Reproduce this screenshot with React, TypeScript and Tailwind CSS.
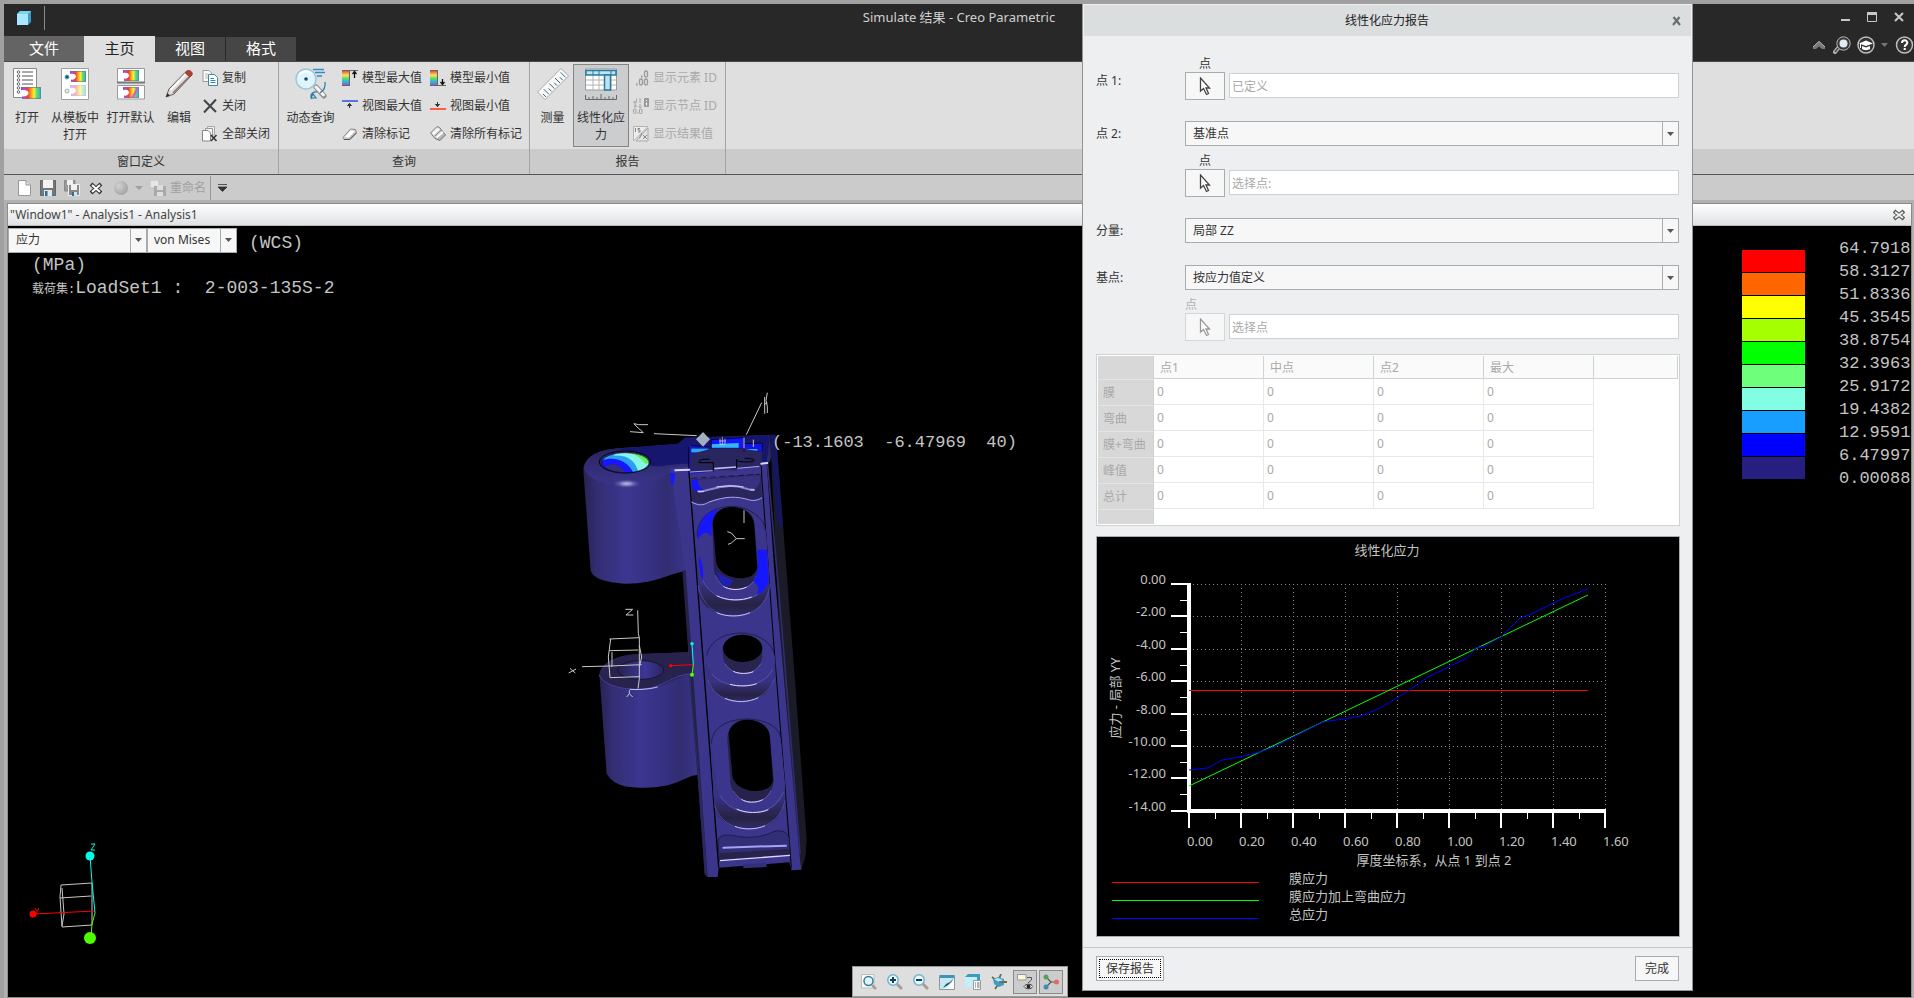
import type { ReactNode } from "react";
import { clsx } from "clsx";

const legendColors = [
  "bg-[#ff0000]",
  "bg-[#ff6600]",
  "bg-[#ffff00]",
  "bg-[#a6ff00]",
  "bg-[#00ff00]",
  "bg-[#6eff7b]",
  "bg-[#82ffe3]",
  "bg-[#189eff]",
  "bg-[#0000ff]",
  "bg-[#261f80]",
];

const legendValues = [
  "64.7918",
  "58.3127",
  "51.8336",
  "45.3545",
  "38.8754",
  "32.3963",
  "25.9172",
  "19.4382",
  "12.9591",
  "6.47997",
  "0.00088",
];

const resultRows = ["膜", "弯曲", "膜+弯曲", "峰值", "总计"];
const resultColumns = ["点1", "中点", "点2", "最大"];

/* ---------- shared gradients ---------- */

const Defs = () => (
  <svg width="0" height="0" className="absolute" aria-hidden="true">
    <defs>
      <linearGradient id="fringe" x1="0" y1="0" x2="1" y2="0">
        <stop offset="0" stopColor="#3a6cf0" />
        <stop offset=".15" stopColor="#d040d0" />
        <stop offset=".35" stopColor="#f04030" />
        <stop offset=".5" stopColor="#ff9a20" />
        <stop offset=".65" stopColor="#fff030" />
        <stop offset=".8" stopColor="#50e070" />
        <stop offset="1" stopColor="#30a8f0" />
      </linearGradient>
      <linearGradient id="spectrum" x1="0" y1="0" x2="0" y2="1">
        <stop offset="0" stopColor="#f05030" />
        <stop offset=".3" stopColor="#ffe060" />
        <stop offset=".55" stopColor="#50e060" />
        <stop offset=".78" stopColor="#30b0e8" />
        <stop offset="1" stopColor="#a050d8" />
      </linearGradient>
      <linearGradient id="metal" x1="0" y1="0" x2="1" y2="1">
        <stop offset="0" stopColor="#ffffff" />
        <stop offset="1" stopColor="#9a9a9a" />
      </linearGradient>
      <radialGradient id="ball" cx=".35" cy=".35" r=".7">
        <stop offset="0" stopColor="#d2d2d2" />
        <stop offset="1" stopColor="#a2a2a2" />
      </radialGradient>
    </defs>
  </svg>
);

/* ---------- ribbon icons ---------- */

const Icon = ({ size = 16, children }: { size?: number; children: ReactNode }) => (
  <svg width={size} height={size} viewBox={`0 0 ${size} ${size}`} fill="none" className="shrink-0" aria-hidden="true">
    {children}
  </svg>
);

const Fringe = ({ x, y, w = 16, h = 11, faded = false }: { x: number; y: number; w?: number; h?: number; faded?: boolean }) => (
  <svg x={x} y={y} width={w} height={h} viewBox="0 0 16 11" preserveAspectRatio="none" opacity={faded ? 0.4 : 1}>
    <path d="M0 0H16V11H1V8.500C3 9 6 8 6 5.500S3 2.500 0 3Z" fill="url(#fringe)" />
    <path d="M0 .5H15.500V10.500H1" stroke="#777" strokeWidth=".6" fill="none" />
  </svg>
);

const OpenIcon = () => (
  <Icon size={32}>
    <path d="M2.500 .5H25.500V29.500H2.500Z" fill="#fff" stroke="#8a8a8a" />
    {[4, 8, 12, 16, 20, 24].map((y) => (
      <g key={y}>
        <circle cx="7.500" cy={y} r="1.300" stroke="#666" />
        {y < 20 && <path d={`M11 ${y}H22`} stroke="#555" />}
      </g>
    ))}
    <Fringe x={10} y={19} w={20} h={12} />
  </Icon>
);

const TemplateIcon = () => (
  <Icon size={32}>
    <path d="M2.500 .5H29.500V31.500H2.500Z" fill="#fff" stroke="#a0a0a0" />
    <circle cx="8" cy="9" r="2" fill="#1c4d70" stroke="#5aa7cc" />
    <circle cx="8" cy="23" r="2" fill="#eee" stroke="#aaa" />
    <Fringe x={11} y={3} />
    <Fringe x={11} y={17} faded />
  </Icon>
);

const DefaultIcon = () => (
  <Icon size={32}>
    <path d="M2.500 .5H29.500V14.500H2.500ZM2.500 17.500H29.500V31H2.500Z" fill="#fff" stroke="#9a9a9a" />
    <path d="M2 14.500H30" stroke="#777" strokeWidth="2" />
    <Fringe x={8} y={2} />
    <Fringe x={8} y={19} />
    <path d="M16 30L22 19H24L19 30Z" fill="#d858d8" />
  </Icon>
);

const PencilIcon = () => (
  <Icon size={32}>
    <path d="M3 29L6 21L22 4.500L27 9L11 26Z" fill="#ddd" stroke="#6b5a55" />
    <path d="M7.500 22L23 6" stroke="#fff" strokeWidth="2" />
    <path d="M10 25L26 9" stroke="#86706a" strokeWidth="1.500" />
    <path d="M22 4.500L24.500 2.500C27 2 30 4 29 7L27 9Z" fill="#c0392f" stroke="#8c4038" />
    <path d="M3 29L4.500 25L7 27.500Z" fill="#333" />
  </Icon>
);

const CopyIcon = () => (
  <Icon>
    <path d="M1 .5H7L9.500 3V11.500H1Z" fill="#fafafa" stroke="#9a9a9a" />
    <path d="M3 4H6M3 6H7M3 8H7" stroke="#bbb" />
    <path d="M6.500 4.500H12.500L15.500 7.500V15.500H6.500Z" fill="#fff" stroke="#3c87a8" />
    <path d="M8.500 8.500H12M8.500 10.500H13.500M8.500 12.500H13.500" stroke="#3c87a8" />
  </Icon>
);

const CloseIcon = () => (
  <Icon>
    <path d="M2 2L14 14M14 1.500L2 14.500" stroke="#444" strokeWidth="2" />
  </Icon>
);

const CloseAllIcon = () => (
  <Icon>
    <path d="M5.500 .5H12.500V9H5.500Z" fill="#eee" stroke="#aaa" />
    <path d="M3.500 2.500H10.500V11H3.500Z" fill="#f4f4f4" stroke="#999" />
    <path d="M.5 4.500H6L8.500 7V15H.5Z" fill="#fff" stroke="#888" />
    <path d="M9 9L14.500 15M14.500 9L9 15" stroke="#333" strokeWidth="1.500" />
  </Icon>
);

const QueryIcon = () => (
  <Icon size={32}>
    <path d="M18 1.500H29M20 4.500H30M22 8H27" stroke="#2f8fc0" strokeWidth="1.500" />
    <path d="M21 19L29 28" stroke="#8c8c8c" strokeWidth="5" strokeLinecap="round" />
    <path d="M21 19L28.500 27" stroke="#f5f5f5" strokeWidth="3" strokeLinecap="round" />
    <circle cx="11" cy="11" r="10" fill="#dff4fc" stroke="#9cc8da" strokeWidth="1.500" />
    <path d="M4 7C7 3 13 2 17 6" stroke="#fff" strokeWidth="2" />
    <circle cx="11" cy="11" r="1.800" fill="#1d4c66" />
    <path d="M30 14C31 20 28 23 25 25M17 31C14 27 18 23 22 24M16 30L21 30L18 26Z" stroke="#2a7ba4" strokeWidth="1.200" />
  </Icon>
);

const ModelIcon = ({ min = false }: { min?: boolean }) => (
  <Icon>
    <rect x="0" y="1" width="8" height="14" fill="url(#spectrum)" />
    <path d={min ? "M0 .5H8M7.500 0V15M0 15.500H16" : "M0 .5H16M7.500 0V15M0 15.500H8"} stroke="#666" />
    <path d={min ? "M12.500 9V14M10.500 12L12.500 14.500L14.500 12" : "M12.500 8V2M10.500 4L12.500 1.500L14.500 4"} stroke="#111" strokeWidth="1.300" />
  </Icon>
);

const ViewIcon = ({ min = false }: { min?: boolean }) => (
  <Icon>
    {min ? (
      <>
        <path d="M0 11H16" stroke="#ff5a46" strokeWidth="2" />
        <path d="M7.500 4V9M5.500 6.500L7.500 8.500L9.500 6.500Z" stroke="#333" fill="#333" />
      </>
    ) : (
      <>
        <path d="M0 3H16" stroke="#5a74e0" strokeWidth="2" />
        <path d="M7.500 10V5M5.500 7.500L7.500 5.500L9.500 7.500Z" stroke="#333" fill="#333" />
      </>
    )}
  </Icon>
);

const EraserIcon = ({ all = false }: { all?: boolean }) => (
  <Icon>
    {all ? (
      <>
        <path d="M.5 7L7 .5L10 2L15.500 9L10 14.500L5 12.500Z" fill="url(#metal)" stroke="#777" />
        <path d="M3 8L9 3M6.500 11.500L13 6" stroke="#fff" strokeWidth="2" />
        <path d="M5 10L11 4" stroke="#888" />
      </>
    ) : (
      <>
        <path d="M1 11.500L8.500 3L13.500 3.500L14.500 6.500L7.500 13.500H2Z" fill="url(#metal)" stroke="#888" />
        <path d="M2.500 11L9 4.500L13 5L7 11.500Z" fill="#fff" />
        <path d="M2 13.500H8L14.500 7" stroke="#555" />
      </>
    )}
  </Icon>
);

const RulerIcon = () => (
  <Icon size={32}>
    <path d="M.5 24L24 .5L31.500 8L8 31.500Z" fill="#f8f8f8" stroke="#a8a8a8" />
    {[0, 1, 2, 3, 4, 5, 6, 7].map((i) => (
      <path key={i} d={`M${9 + i * 2.800} ${29 - i * 2.800}l${i % 2 ? -5 : -3} ${i % 2 ? -5 : -3}`} stroke="#2f6a7c" />
    ))}
  </Icon>
);

const LinearizeIcon = () => (
  <Icon size={32}>
    <path d="M.5 1H31.500V22H.5Z" fill="#fff" stroke="#999" />
    <path d="M8 6V22M14 6V22M26 6V22M1 12H31M1 17H31" stroke="#b4b4b4" />
    <path d="M1 2.500H31V7H1Z" fill="#bfe3f2" stroke="#2a7b9c" strokeWidth="1.500" />
    <path d="M8 2V7M14 2V7M26 2V7" stroke="#2a7b9c" />
    <path d="M19.500 7H25.500V22H19.500Z" fill="#bfe3f2" stroke="#2a7b9c" strokeWidth="1.500" />
    <path d="M.5 27V31.500H31.500V27M4 29V31M8 28V31M12 29V31M16 26V31M20 29V31M24 28V31M28 29V31" stroke="#666" />
  </Icon>
);

const ElementIdIcon = () => (
  <Icon>
    <path d="M8 6.500H9.500M3 14.500H4.500" stroke="#999" strokeWidth="2" />
    <rect x="11.500" y="1" width="3" height="6" rx="1.500" stroke="#999" strokeWidth="1.300" />
    <rect x="6.500" y="9" width="3" height="6" rx="1.500" stroke="#999" strokeWidth="1.300" />
    <rect x="11.500" y="9" width="3" height="6" rx="1.500" stroke="#999" strokeWidth="1.300" />
  </Icon>
);

const NodeIdIcon = () => (
  <Icon>
    <path d="M1 4H3.500V.500M3.500 5H1V3M7 0V5M2 6V10M1 8H4M7 6V10M5.500 8.500L7 10L8.500 8.500" stroke="#a6a6a6" />
    <rect x="11" y="0" width="5" height="9" rx="1" fill="#999" />
    <path d="M13.500 2V3M13.500 4.500V7.500" stroke="#fff" />
    <rect x=".5" y="11" width="2.500" height="4.500" rx="1" stroke="#a0a0a0" />
    <rect x="6.500" y="11" width="2.500" height="4.500" rx="1" stroke="#a0a0a0" />
    <path d="M4.500 15H5.500" stroke="#a0a0a0" strokeWidth="1.500" />
  </Icon>
);

const ResultValueIcon = () => (
  <Icon>
    <path d="M.5 .5H15L.5 15Z" fill="#ececec" stroke="#b4b4b4" />
    <path d="M15 2V15H3Z" fill="#e4e4e4" stroke="#aaa" />
    <path d="M2.500 2V6M7 2.500H5V4H7V6H5M6 12C7 13 8 8 9 7M10 9L14 13M14 9L10 13" stroke="#888" />
  </Icon>
);

/* ---------- ribbon pieces ---------- */

const BigButton = ({ icon, label, className, active = false }: { icon: ReactNode; label: string; className: string; active?: boolean }) => (
  <button
    type="button"
    className={clsx(
      "flex h-[83px] shrink-0 flex-col items-center border pt-[3px]",
      active ? "border-[#858585] bg-[#cccdcf]" : "border-transparent",
      className,
    )}
  >
    {icon}
    <span className="mt-[9px] w-12 text-center leading-[17px]">{label}</span>
  </button>
);

const SmallButton = ({ icon, label, disabled = false }: { icon: ReactNode; label: string; disabled?: boolean }) => (
  <button type="button" disabled={disabled} className="flex h-7 items-center gap-1 whitespace-nowrap disabled:text-[#a9a9a9]">
    {icon}
    {label}
  </button>
);

const RibbonGroup = ({ title, className, children }: { title: string; className: string; children: ReactNode }) => (
  <section className={clsx("flex shrink-0 flex-col border-r border-[#a3a3a3]", className)}>
    <div className="flex h-[87px] items-start pt-[2px]">{children}</div>
    <h2 className="h-[25px] bg-[#cbcbcb] text-center leading-[25px]">{title}</h2>
  </section>
);

const Ribbon = () => (
  <div className="flex border-b border-[#555] bg-[#dfdfdf] text-[#333]">
    <RibbonGroup title="窗口定义" className="w-[275px]">
      <BigButton icon={<OpenIcon />} label="打开" className="w-[46px]" />
      <BigButton icon={<TemplateIcon />} label="从模板中打开" className="w-[50px]" />
      <BigButton icon={<DefaultIcon />} label="打开默认" className="w-[61px]" />
      <BigButton icon={<PencilIcon />} label="编辑" className="mr-[5px] w-9" />
      <div>
        <SmallButton icon={<CopyIcon />} label="复制" />
        <SmallButton icon={<CloseIcon />} label="关闭" />
        <SmallButton icon={<CloseAllIcon />} label="全部关闭" />
      </div>
    </RibbonGroup>
    <RibbonGroup title="查询" className="w-[251px]">
      <BigButton icon={<QueryIcon />} label="动态查询" className="w-[63px]" />
      <div className="w-[88px]">
        <SmallButton icon={<ModelIcon />} label="模型最大值" />
        <SmallButton icon={<ViewIcon />} label="视图最大值" />
        <SmallButton icon={<EraserIcon />} label="清除标记" />
      </div>
      <div>
        <SmallButton icon={<ModelIcon min />} label="模型最小值" />
        <SmallButton icon={<ViewIcon min />} label="视图最小值" />
        <SmallButton icon={<EraserIcon all />} label="清除所有标记" />
      </div>
    </RibbonGroup>
    <RibbonGroup title="报告" className="w-[196px]">
      <BigButton icon={<RulerIcon />} label="测量" className="w-[43px] pl-[2px]" />
      <BigButton icon={<LinearizeIcon />} label="线性化应力" className="mr-1 w-14" active />
      <div>
        <SmallButton icon={<ElementIdIcon />} label="显示元素 ID" disabled />
        <SmallButton icon={<NodeIdIcon />} label="显示节点 ID" disabled />
        <SmallButton icon={<ResultValueIcon />} label="显示结果值" disabled />
      </div>
    </RibbonGroup>
    <div className="flex flex-1 flex-col justify-end">
      <div className="h-[25px] bg-[#cbcbcb]" />
    </div>
  </div>
);

const TitleBar = () => (
  <header className="border-b border-[#4b4749] bg-[#282828] text-white">
    <div className="flex h-8 items-start pt-[2px]">
      <div className="flex flex-1 items-center">
        <span className="flex h-6 w-[41px] items-center justify-center border-r border-[#8a8a8a] pr-px">
          <Icon size={14}>
            <path d="M0 3L3 0H14V11L11 14H0Z" fill="#3d9cc4" />
            <path d="M0 3L3 0H14L11 3Z" fill="#79d4f2" />
            <path d="M0 3H11V14H0Z" fill="#a8e9ff" />
          </Icon>
        </span>
      </div>
      <h1 className="text-[13px] leading-[22px] text-[#d0d0d0]">Simulate 结果 - Creo Parametric</h1>
      <div className="flex flex-1 justify-end">
        <div className="flex items-center gap-[11px] pt-[3px] pr-[7px] text-[#c4c8cc]">
          <button type="button" aria-label="最小化">
            <Icon><path d="M4 11H13" stroke="currentColor" strokeWidth="2" /></Icon>
          </button>
          <button type="button" aria-label="最大化">
            <Icon><path d="M3.500 4V12.500H12.500V4M3 4.500H13" stroke="currentColor" /><path d="M3 4.500H13" stroke="currentColor" strokeWidth="3" /></Icon>
          </button>
          <button type="button" aria-label="关闭">
            <Icon><path d="M4 4L12 12M12 4L4 12" stroke="currentColor" strokeWidth="2" /></Icon>
          </button>
        </div>
      </div>
    </div>
    <nav className="flex h-[25px] items-end text-[15px] leading-5">
      <button type="button" className="h-[25px] w-20 bg-[#646464] pb-[2px]">文件</button>
      <button type="button" className="-mb-px h-[26px] w-[71px] bg-[#dfdfdf] pb-[2px] text-[#222]">主页</button>
      <button type="button" className="mr-px h-6 w-[70px] bg-[#464646] pb-[2px]">视图</button>
      <button type="button" className="h-6 w-[70px] bg-[#464646] pb-[2px]">格式</button>
      <div className="ml-auto flex h-[18px] items-center self-start text-[#d2d2d2]">
        <button type="button" className="mr-[7px]" aria-label="收起功能区">
          <svg width="14" height="9" viewBox="0 0 14 9"><path d="M7 0L13 6V8H10L7 5.500L4 8H1V6Z" fill="#777" /><path d="M1 6L7 .500L13 6" stroke="#bbb" fill="none" /></svg>
        </button>
        <button type="button" className="mr-[6px]" aria-label="搜索">
          <svg width="18" height="18" viewBox="0 0 18 18" fill="none">
            <path d="M6 11L2 16" stroke="#b8b8b8" strokeWidth="4" strokeLinecap="round" />
            <path d="M6 11L2 16" stroke="#444" strokeWidth="1.500" />
            <circle cx="10.500" cy="7.500" r="6.700" fill="#383838" stroke="#b8b8b8" />
            <circle cx="10.500" cy="7.500" r="4" fill="#e4ecf2" />
          </svg>
        </button>
        <button type="button" className="mr-[6px]" aria-label="学习">
          <svg width="18" height="18" viewBox="0 0 18 18" fill="none">
            <circle cx="9" cy="9" r="8" fill="#333" stroke="#bdbdbd" strokeWidth="1.500" />
            <path d="M2 7.500L9 4.500L16 7.500L9 10Z" fill="#fff" />
            <path d="M5 10V13C7 14.500 11 14.500 13 13V10L9 11.500Z" fill="#fff" />
            <path d="M3.500 8V12" stroke="#fff" />
          </svg>
        </button>
        <svg width="7" height="4" viewBox="0 0 7 4" className="mr-[7px]"><path d="M0 0H7L3.500 4Z" fill="#777" /></svg>
        <button type="button" aria-label="帮助">
          <svg width="19" height="18" viewBox="0 0 19 18" fill="none">
            <circle cx="9.500" cy="9" r="8" fill="#333" stroke="#bdbdbd" strokeWidth="1.500" />
            <path d="M7 7C7 3.500 12.300 3.500 12.300 6.800C12.300 8.800 9.700 8.500 9.700 11" stroke="#fff" strokeWidth="2" />
            <path d="M8.700 13H10.800" stroke="#fff" strokeWidth="2" />
          </svg>
        </button>
      </div>
    </nav>
  </header>
);

const QuickBar = () => (
  <div className="flex h-[25px] items-center bg-[#cbcbcb] pl-3 text-[#a0a0a0]">
    <button type="button" className="mr-2" aria-label="新建">
      <Icon><path d="M2.500 .5H10L14.500 5V15.500H2.500Z" fill="#fff" stroke="#999" /><path d="M10 .5V5H14.500" fill="#ddd" stroke="#999" /></Icon>
    </button>
    <button type="button" className="mr-2" aria-label="保存">
      <Icon>
        <path d="M.5 .5H15.500V15.500H.5Z" fill="#777" stroke="#666" />
        <path d="M3 0H13V8H3Z" fill="#f2f2f2" />
        <path d="M4 10H12V16H4Z" fill="#d8eaf2" />
        <path d="M5 11H7.500V16H5Z" fill="#2f6f90" />
      </Icon>
    </button>
    <button type="button" className="mr-2" aria-label="全部保存">
      <Icon>
        <path d="M.5 .5H11V11H.5Z" fill="#999" stroke="#888" />
        <path d="M3 0H9V5H3Z" fill="#f2f2f2" />
        <path d="M4.500 4.500H15.500V15.500H4.500Z" fill="#888" stroke="#eee" />
        <path d="M7 5H13V10H7Z" fill="#f2f2f2" />
        <path d="M8 12H13V16H8Z" fill="#cfe3ec" />
        <path d="M8 12H10V16H8Z" fill="#2f6f90" />
      </Icon>
    </button>
    <button type="button" className="mr-[9px]" aria-label="关闭窗口">
      <Icon><path d="M3 4L13 13M13 4L3 13" stroke="#333" strokeWidth="4" /><path d="M4 5L12 12M12 5L4 12" stroke="#fff" strokeWidth="2" /></Icon>
    </button>
    <button type="button" disabled className="mr-[6px]" aria-label="外观">
      <Icon><circle cx="8" cy="8" r="7" fill="url(#ball)" /></Icon>
    </button>
    <svg width="8" height="4" viewBox="0 0 8 4" className="mr-[7px]"><path d="M0 0H8L4 4Z" fill="#a0a0a0" /></svg>
    <button type="button" disabled className="flex items-center gap-1 whitespace-nowrap">
      <Icon>
        <path d="M0 0H9V8H0Z" fill="#e6e6e6" stroke="#bbb" />
        <path d="M4 6H16V16H4Z" fill="#aaa" />
        <path d="M7 5H13V10H7ZM7 12H13V16H7Z" fill="#ddd" />
      </Icon>
      重命名
    </button>
    <span className="mr-[3px] ml-1 h-6 border-r border-[#999]" />
    <button type="button" className="ml-1" aria-label="自定义">
      <svg width="9" height="8" viewBox="0 0 9 8"><path d="M0 .5H9M0 3H9L4.500 7.500Z" stroke="#333" fill="#333" strokeWidth=".8" /></svg>
    </button>
  </div>
);

/* ---------- graphics area ---------- */

const Bracket = () => (
  <svg width="276" height="520" viewBox="-30 -10 828 1560" fill="none" className="absolute top-[151px] left-[552px]" aria-hidden="true">
    <defs>
      <linearGradient id="barrel" x1="0" y1="0" x2="1" y2="0">
        <stop offset="0" stopColor="#272350" />
        <stop offset=".12" stopColor="#332d72" />
        <stop offset=".4" stopColor="#3c3690" />
        <stop offset=".66" stopColor="#353080" />
        <stop offset=".78" stopColor="#322d72" />
        <stop offset="1" stopColor="#3b358c" />
      </linearGradient>
      <linearGradient id="bore" x1="0" y1="0" x2="1" y2="0">
        <stop offset="0" stopColor="#26224e" />
        <stop offset=".6" stopColor="#3d3797" />
        <stop offset="1" stopColor="#2a2560" />
      </linearGradient>
      <linearGradient id="shoulder" x1="0" y1="0" x2="0" y2="1">
        <stop offset=".2" stopColor="#27235a" />
        <stop offset="1" stopColor="#3b358c" />
      </linearGradient>
      <linearGradient id="wall" x1="0" y1="0" x2="0" y2="1">
        <stop offset="0" stopColor="#3b358c" />
        <stop offset=".7" stopColor="#383283" />
        <stop offset=".9" stopColor="#262244" />
        <stop offset="1" stopColor="#312c68" />
      </linearGradient>
      <filter id="soft" x="-50%" y="-200%" width="200%" height="500%">
        <feGaussianBlur stdDeviation="4" />
      </filter>
      <clipPath id="boreClip">
        <ellipse cx="166" cy="247" rx="71" ry="30" />
      </clipPath>
    </defs>

    {/* upper barrel */}
    <path d="M40 268C44 225 90 206 160 203L330 193L360 250V572C310 570 270 610 168 610C110 608 68 595 62 570Z" fill="url(#barrel)" />
    <path d="M42 262C50 222 95 206 160 203L325 190L345 172L615 163L600 245L350 262C290 262 270 316 165 316C90 312 46 290 42 262Z" fill="url(#shoulder)" />
    <path d="M110 208L325 190L345 172L600 165L590 245L350 250C300 250 270 262 244 256C240 225 190 205 110 208Z" fill="#17166e" />
    <ellipse cx="165" cy="245" rx="77" ry="33" fill="#2b2768" stroke="#05050f" strokeWidth="3" />
    <g clipPath="url(#boreClip)">
      <rect x="90" y="210" width="150" height="70" fill="#1616ff" />
      <path d="M96 240C125 228 172 236 190 278H245V210H100Z" fill="#28a0f4" />
      <path d="M130 226C176 224 196 242 206 278H245V210H140Z" fill="#88f5e6" />
      <path d="M176 218C204 225 218 238 226 250L245 246V210H180Z" fill="#5cf050" />
      <path d="M100 268C112 245 150 245 166 280H100Z" fill="#332d7c" />
    </g>
    <ellipse cx="166" cy="247" rx="71" ry="30" stroke="#0a0a20" strokeWidth="2" />
    <ellipse cx="170" cy="310" rx="34" ry="4" fill="#8c86d8" filter="url(#soft)" />
    <ellipse cx="170" cy="310" rx="18" ry="3" fill="#fff" filter="url(#soft)" />

    {/* lower barrel */}
    <path d="M88 880L110 1180C130 1212 160 1222 220 1222C280 1222 315 1210 345 1195C370 1184 380 1183 395 1183L370 815L240 820Z" fill="url(#barrel)" />
    <path d="M88 880C96 845 140 822 215 820L370 815V880C320 882 290 927 205 927C130 925 90 905 88 880Z" fill="#27234c" />
    <path d="M88 884C96 908 140 927 205 927C285 924 300 885 365 880" stroke="#4540a0" strokeWidth="3" />
    <path d="M180 927C215 929 245 925 262 920" stroke="#c8c4ff" strokeWidth="3" strokeLinecap="round" />
    <ellipse cx="212" cy="869" rx="69" ry="28" fill="url(#bore)" stroke="#0a0a18" strokeWidth="2" />

    {/* dark right side */}
    <path d="M600 163L618 165L675 900L710 1380L706 1430L694 1468L660 1420Z" fill="#1b1b27" />
    <path d="M600 165L618 165L640 450L620 420Z" fill="#16165c" />

    {/* rails and face */}
    <path d="M300 262L590 245L612 560L688 1420L694 1468L665 1470L658 1446L446 1462L443 1490L412 1490L383 1185L355 816L345 570Z" fill="#3b358c" />
    <path d="M337 570L347 570L413 1490L404 1480Z" fill="#25224a" />
    <path d="M350 816L383 1185L404 1480L412 1490L397 1270Z" fill="#2b2760" />
    <path d="M592 245L632 700L690 1420" stroke="#302b6c" strokeWidth="5" />
    <path d="M357 200V275L446 1462" stroke="#000" strokeWidth="4" />
    <path d="M572 215L576 300L612 800L664 1462" stroke="#000" strokeWidth="3" />

    {/* clip on the top */}
    <path d="M358 196H420V275L358 280Z" fill="#1818c0" />
    <path d="M364 205H415V216H364Z" fill="#2ba8f0" />
    <path d="M424 178L522 172V202H424Z" fill="#1414ff" />
    <path d="M424 192L506 188V202H424Z" fill="#34b8f4" />
    <path d="M524 190H577V212H524Z" fill="#1414e8" />
    <path d="M526 206H562V211H526Z" fill="#30a8f0" />
    <path d="M362 222L422 205H522L576 215V258L500 264V270H432V274H362Z" fill="#29255e" />
    <path d="M430 247V272M386 247H430M386 243C392 236 405 236 418 237M500 264V236M524 234C545 234 554 238 552 241C548 246 520 246 502 242" stroke="#000" strokeWidth="3" />
    <path d="M424 178V204M522 172V214M424 178L522 172M364 196L424 200M524 190L577 188V212" stroke="#000" strokeWidth="2" />
    <path d="M316 270L358 268M574 250L592 248" stroke="#d8d4ff" strokeWidth="6" strokeLinecap="round" />
    <path d="M433 265L498 260" stroke="#c0bcf8" strokeWidth="5" />
    <path d="M360 275L428 271M502 264L568 258" stroke="#a8a4f0" strokeWidth="3" />
    <path d="M300 277L316 280L310 314H304Z" fill="#1616ff" />

    {/* wavy lip */}
    <path d="M364 298L572 280L576 350C540 372 500 340 440 356C410 362 400 380 366 362Z" fill="#2a265c" />
    <path d="M364 294L568 282" stroke="#0c0c20" strokeWidth="2" strokeDasharray="18 10" />
    <path d="M368 300C372 330 385 335 405 332C430 315 510 305 545 328C565 326 570 310 572 284" fill="#37317f" />
    <path d="M366 300L385 298C380 315 395 325 407 333C395 340 375 336 366 320Z" fill="#1414ff" />
    <path d="M385 333C410 336 420 320 480 317C520 316 535 332 552 328" stroke="#8a84d8" strokeWidth="6" strokeLinecap="round" />
    <path d="M440 320C460 316 500 315 520 320M385 334H400M542 329H552" stroke="#dcd8ff" strokeWidth="3" strokeLinecap="round" />
    <path d="M364 365C385 376 400 376 415 366C470 346 500 348 535 358C555 364 565 358 576 352" stroke="#aca6f0" strokeWidth="3" />

    {/* upper slot */}
    <path d="M382 470C378 410 430 378 487 378C545 380 586 420 588 460L598 600C598 670 550 708 488 708C430 706 386 670 384 630Z" fill="url(#wall)" />
    <path d="M384 615C400 680 440 706 488 708C550 708 596 670 600 610" stroke="#5e58b4" strokeWidth="2" />
    <path d="M440 697C470 710 510 710 540 697" stroke="#c4c0ff" strokeWidth="3" />
    <path d="M382 470C378 410 430 378 487 378C545 380 586 420 588 460L597 590C590 640 550 660 494 660C430 656 398 610 390 570Z" fill="#3b358c" />
    <path d="M382 470C378 410 430 378 487 378C545 380 586 420 586 450" stroke="#16142c" strokeWidth="2" />
    <path d="M398 600C420 640 450 658 494 660C545 660 585 640 596 595" stroke="#6a64c4" strokeWidth="2" />
    <path d="M440 646C470 662 515 662 545 650" stroke="#dcd8ff" strokeWidth="3" />
    <path d="M427 440C424 395 450 380 487 380C525 382 550 400 554 430L564 570C560 605 530 628 494 628C465 626 435 605 432 570Z" fill="#26224c" />
    <path d="M436 585C450 615 465 626 494 628C530 628 550 612 560 585" stroke="#7670cc" strokeWidth="2" />
    <path d="M460 618C480 630 510 630 530 620" stroke="#dcd8ff" strokeWidth="3" />
    <path d="M384 478C380 420 410 395 445 386C428 405 424 430 425 468C410 450 395 455 384 478Z" fill="#1616ff" />
    <path d="M388 530C398 545 402 575 398 600C390 580 386 560 388 530ZM562 508H590L597 600C590 625 575 640 560 643C575 615 550 605 548 600C562 596 566 560 562 508Z" fill="#1616ff" />
    <path d="M440 570C455 590 475 590 488 600C485 618 470 622 462 618C450 608 442 590 440 570Z" fill="#2020b0" />
    <path d="M428 430C430 400 450 380 487 380C525 382 548 400 552 430L562 560C558 582 540 594 510 594C470 592 440 570 438 540Z" fill="#000" />

    {/* middle hole */}
    <path d="M408 850C405 790 460 758 515 758C575 760 615 800 616 840V880C610 940 560 965 513 965C450 962 412 920 408 890Z" fill="url(#wall)" />
    <path d="M414 900C430 945 470 964 513 965C560 964 600 935 614 895" stroke="#5e58b4" strokeWidth="2" />
    <path d="M465 954C495 967 535 967 565 952" stroke="#c4c0ff" strokeWidth="3" />
    <path d="M408 840C405 790 460 758 515 758C575 760 612 800 614 840C610 890 570 917 518 917C460 915 410 885 408 840Z" fill="#3b358c" />
    <path d="M410 825C420 780 465 758 515 758C570 760 608 790 614 825" stroke="#16142c" strokeWidth="2" />
    <path d="M424 880C445 905 480 917 518 917C560 916 595 895 608 868" stroke="#6a64c4" strokeWidth="2" />
    <path d="M480 912C505 919 540 918 560 910" stroke="#dcd8ff" strokeWidth="3" />
    <path d="M458 815C460 780 485 764 518 763C550 764 578 785 577 820C578 860 550 880 520 880C480 878 458 855 458 815Z" fill="#28244f" />
    <path d="M464 850C480 872 500 880 520 880C545 880 565 865 572 850" stroke="#7670cc" strokeWidth="2" />
    <path d="M490 873C505 881 535 881 550 874" stroke="#dcd8ff" strokeWidth="3" />
    <ellipse cx="518" cy="804" rx="59" ry="41" fill="#000" />

    {/* lower slot */}
    <path d="M422 1100C420 1040 475 1016 533 1016C590 1018 632 1050 634 1090L646 1240C645 1310 600 1346 537 1346C475 1344 435 1310 432 1270Z" fill="url(#wall)" />
    <path d="M434 1275C450 1325 490 1345 537 1346C595 1345 635 1310 645 1260" stroke="#5e58b4" strokeWidth="2" />
    <path d="M495 1338C520 1349 560 1348 585 1336" stroke="#c4c0ff" strokeWidth="3" />
    <path d="M424 1090C425 1040 475 1016 533 1016C590 1018 630 1050 632 1080L645 1210C640 1270 600 1297 545 1297C480 1294 442 1250 438 1210Z" fill="#3b358c" />
    <path d="M424 1090C425 1040 475 1016 533 1016C590 1018 625 1040 632 1070" stroke="#16142c" strokeWidth="2" />
    <path d="M450 1245C470 1280 505 1296 545 1297C590 1297 625 1275 640 1235" stroke="#6a64c4" strokeWidth="2" />
    <path d="M500 1286C525 1299 570 1300 595 1288" stroke="#dcd8ff" strokeWidth="3" />
    <path d="M472 1080C472 1035 500 1017 533 1016C570 1018 598 1040 600 1070L611 1200C608 1245 580 1266 545 1266C510 1264 482 1240 481 1200Z" fill="#26224c" />
    <path d="M490 1232C505 1255 520 1265 545 1266C575 1266 595 1250 603 1230" stroke="#7670cc" strokeWidth="2" />
    <path d="M515 1257C530 1268 560 1268 578 1258" stroke="#dcd8ff" strokeWidth="3" />
    <path d="M476 1060C478 1035 505 1018 533 1018C570 1020 595 1038 599 1065L609 1200C605 1220 590 1232 550 1232C515 1230 490 1210 487 1185Z" fill="#000" />

    {/* foot */}
    <path d="M444 1380C450 1362 470 1362 490 1366C540 1376 580 1370 610 1354C635 1346 655 1356 658 1375L660 1425L448 1442Z" fill="#332e78" stroke="#14122a" strokeWidth="2" />
    <path d="M450 1418L658 1406V1422L450 1438Z" fill="#27234c" />
    <path d="M460 1402L648 1396" stroke="#a8a2f2" strokeWidth="6" strokeLinecap="round" />
    <path d="M450 1441L660 1425" stroke="#dedaff" strokeWidth="4" />
    <path d="M520 1452V1464L590 1460V1448" fill="#332e78" />

    {/* selected point and its axes */}
    <path d="M252 160L380 166M529 163L575 67M522 390V428M499 475H524M472 454L484 458L499 475L484 488L474 492M592 37L588 60L592 78M584 50V100M592 78V98M582 72L592 68M234 133H206L192 130L198 137L220 157L180 154M550 178V200M522 172V204" stroke="#c8c8c8" strokeWidth="3" />
    <path d="M399 155L420 177L399 199L378 177Z" fill="#a3aec0" />
    <path d="M448 182H468M450 175V192H465V175M457 170V192" stroke="#ddd" strokeWidth="2" />

    {/* part coordinate system */}
    <path d="M203 690L205 760L208 772V895L204 925M36 859L120 857L215 853M118 776L208 772M118 811L205 809M122 776L115 830L120 892L208 889M126 815V860M208 795L215 830L208 860M166 687H188L168 704H190M0 864L16 878M-4 878L18 866M178 930V940L170 950M178 940L188 950" stroke="#c8c8c8" strokeWidth="3" />
    <path d="M302 856L370 853" stroke="#ff0000" strokeWidth="3" />
    <path d="M366 790L370 853" stroke="#00ffe6" strokeWidth="3" />
    <path d="M370 853L366 883" stroke="#55ff00" strokeWidth="3" />
    <circle cx="302" cy="856" r="5" fill="#ff0000" />
    <circle cx="366" cy="790" r="5" fill="#00ffe6" />
    <circle cx="366" cy="883" r="6" fill="#55ff00" />
  </svg>
);

const AxisTriad = () => (
  <svg width="80" height="110" viewBox="0 0 80 110" fill="none" className="absolute bottom-[45px] left-[18px]" aria-hidden="true">
    <path d="M35 43L66 41V83L36 85L34 55L35 43M36 46L38 72L36 84M34 56L65 54" stroke="#c8c8c8" />
    <path d="M7 72L69 69" stroke="#ff0000" />
    <path d="M64 14L66 40L69 71" stroke="#00ffe6" />
    <path d="M69 71L66 82L65 96" stroke="#55ff00" />
    <circle cx="7" cy="72" r="3.500" fill="#ff0000" />
    <circle cx="64" cy="14" r="4.500" fill="#00ffe6" />
    <circle cx="64" cy="96" r="6" fill="#4dff00" />
    <path d="M65 2H69L65 8H69" stroke="#00ffe6" />
    <path d="M9 66L11 69L13 66M11 69V72" stroke="#ff0000" />
  </svg>
);

const ColorLegend = () => (
  <div className="absolute top-[11px] right-0 flex w-[169px]">
    <ul className="mt-[13px] w-[63px] shrink-0">
      {legendColors.map((color) => (
        <li key={color} className={clsx("h-[23px] border-b border-black", color)} />
      ))}
    </ul>
    <ol className="ml-[34px] font-['Liberation_Mono',monospace] text-[17px] leading-[23px] text-[#c4c4c4]">
      {legendValues.map((value) => (
        <li key={value}>{value}</li>
      ))}
    </ol>
  </div>
);

const ViewToolbar = () => (
  <div className="absolute bottom-0 left-[844px] flex h-[31px] items-center gap-[2px] border border-[#999] bg-[#dedede] px-1">
    <button type="button" className="p-1" aria-label="重新调整">
      <Icon>
        <path d="M.5 .5H13V14H.5Z" fill="#fafafa" stroke="#bbb" />
        <circle cx="7.500" cy="7" r="4.500" fill="#e4f4fa" stroke="#2f7f9f" strokeWidth="1.500" />
        <path d="M11 11L15 15" stroke="#a89c94" strokeWidth="2.500" />
      </Icon>
    </button>
    {[true, false].map((plus) => (
      <button key={String(plus)} type="button" className="p-1" aria-label={plus ? "放大" : "缩小"}>
        <Icon>
          <path d="M10 10L15 15" stroke="#a89c94" strokeWidth="3" />
          <circle cx="6" cy="6" r="5.200" fill="#eaf8fd" stroke="#6fb4cc" strokeWidth="1.500" />
          <path d={plus ? "M3 6H9M6 3V9" : "M3 6H9"} stroke="#12405c" strokeWidth="2" />
        </Icon>
      </button>
    ))}
    <button type="button" className="p-1" aria-label="重画">
      <Icon>
        <path d="M.5 1.500H15.500V15.500H.5Z" fill="#c6e8f4" stroke="#8a9aa0" />
        <path d="M1 1H15V4H1Z" fill="#3f93b4" />
        <path d="M15 4V15H4C9 14 13 9 15 4Z" fill="#fff" />
        <path d="M4 14C8 12 12 9 15 4L11 8L7 10Z" fill="#1d4f68" />
      </Icon>
    </button>
    <button type="button" className="p-1" aria-label="已命名视图">
      <Icon>
        <path d="M0 3L3 0H15V9L12 12H0Z" fill="#3b9cc2" />
        <path d="M0 3H12V13H0Z" fill="#c5eefb" />
        <path d="M8.500 6.500H15.500V15.500H8.500Z" fill="#fff" stroke="#999" />
        <path d="M10 9H11M12 9H14.500M10 11H11M12 11H14.500M10 13H11M12 13H14.500" stroke="#666" />
      </Icon>
    </button>
    <button type="button" className="p-1" aria-label="显示样式">
      <Icon>
        <path d="M1 3L6 7M4 15L8 9M16 8L10 8M10 0L8 5" stroke="#7c6340" strokeWidth="1.800" />
        <path d="M2 5L7 3L13 5V11L8 13L3 10Z" fill="#3c9cc8" />
        <path d="M3 5L7 4L12 6L8 8Z" fill="#b4e6f8" />
        <path d="M8 8L16 8" stroke="#7c6340" strokeWidth="1.500" />
      </Icon>
    </button>
    <button type="button" className="border border-[#8a8a8a] bg-[#cbcccd] p-[3px]" aria-label="注释显示">
      <Icon>
        <path d="M.5 .5H9V6H.5Z" fill="#fff6d8" stroke="#999" />
        <path d="M10 3.500H14.500V6L11 9" stroke="#555" />
        <path d="M7 12.500C9 9.500 14 9.500 16 12.500C14 15.500 9 15.500 7 12.500Z" fill="#fff" stroke="#333" />
        <circle cx="11.500" cy="12.500" r="2" fill="#222" />
      </Icon>
    </button>
    <button type="button" className="border border-[#8a8a8a] bg-[#cbcccd] p-[3px]" aria-label="基准显示">
      <Icon>
        <path d="M3 3L8 8L3 13M8 8H13" stroke="#555" strokeWidth="1.200" />
        <circle cx="3" cy="3" r="2.500" fill="#55a055" />
        <circle cx="3" cy="13" r="2.500" fill="#3c8cb8" />
        <circle cx="13.500" cy="8" r="2.500" fill="#e06a60" />
      </Icon>
    </button>
  </div>
);

const Select = ({ id, value, label, className, slim = false }: { id: string; value: string; label?: string; className?: string; slim?: boolean }) => (
  <div className={clsx("relative h-[25px] border border-[#a9acae] bg-[#f7f7f7]", className)}>
    <select id={id} aria-label={label} className={clsx("h-full w-full appearance-none bg-transparent pr-4 text-[#333] outline-none", slim ? "pl-[6px]" : "pl-[7px]")}>
      <option>{value}</option>
    </select>
    <span className="pointer-events-none absolute inset-y-0 right-0 flex w-4 items-center justify-center border-l border-[#a9acae]">
      <svg width="7" height="4" viewBox="0 0 7 4"><path d="M0 0H7L3.500 4Z" fill="#555" /></svg>
    </span>
  </div>
);

const Viewport = () => (
  <section className="mr-[2px] ml-[3px] flex flex-1 flex-col border border-[#8c8c8c]">
    <div className="flex h-[22px] items-center justify-between border-b border-[#b8bcbc] bg-linear-to-b from-white to-[#dfe1e3] pr-[6px] pl-[2px] text-[#444]">
      <h2>"Window1" - Analysis1 - Analysis1</h2>
      <button type="button" aria-label="关闭窗口">
        <Icon size={12}><path d="M1 2L11 10M11 2L1 10" stroke="#555" strokeWidth="4" /><path d="M2 3L10 9M10 3L2 9" stroke="#f0f0f0" strokeWidth="2" /></Icon>
      </button>
    </div>
    <div className="relative flex-1 overflow-hidden bg-black pt-px font-['Liberation_Mono','Noto_Sans_CJK_SC',monospace] text-[18px] leading-[23px] text-[#c4c4c4]">
      <div className="mb-px flex items-center font-['Noto_Sans','Noto_Sans_CJK_SC',sans-serif] text-xs">
        <Select id="quantity" label="结果量" value="应力" className="w-[139px]" />
        <Select id="component" label="分量" value="von Mises" className="w-[90px]" slim />
        <span className="pt-[6px] pl-3 font-['Liberation_Mono',monospace] text-[18px] leading-5">(WCS)</span>
      </div>
      <p className="pl-6">(MPa)</p>
      <p className="pl-6 whitespace-pre"><span className="text-xs">载荷集:</span>LoadSet1 :  2-003-135S-2</p>
      <Bracket />
      <p className="absolute top-[205px] left-[764px] text-[17px] whitespace-pre">(-13.1603  -6.47969  40)</p>
      <AxisTriad />
      <ColorLegend />
      <ViewToolbar />
    </div>
  </section>
);

/* ---------- report dialog ---------- */

const PointPicker = ({ id, value, disabled = false }: { id: string; value: string; disabled?: boolean }) => (
  <div className="flex items-end gap-1">
    <div className="w-10 shrink-0">
      <label htmlFor={id} className={clsx("block leading-4", disabled ? "text-[#b0b0b0]" : "text-center")}>点</label>
      <button
        type="button"
        disabled={disabled}
        aria-label="选择点"
        className="flex h-7 w-full items-center justify-center border border-[#a9acae] bg-[#f7f7f7] text-[#444] disabled:border-[#d4d7d9] disabled:text-[#999]"
      >
        <svg width="12" height="19" viewBox="0 0 12 19" fill="none">
          <path d="M1.500 1V14L4.500 11.500L7.500 17.500L9.500 16.500L7 11H10.500Z" fill="#fff" stroke="currentColor" strokeWidth="1.300" />
        </svg>
      </button>
    </div>
    <input
      id={id}
      type="text"
      readOnly
      value={value}
      className="mb-[2px] h-[25px] min-w-0 flex-1 border border-[#cdd1d4] bg-white px-[2px] text-[#a9a9a9] outline-none"
    />
  </div>
);

const StressChart = () => {
  const x = (i: number) => 92 + i * 52;
  const y = (i: number) => 47 + Math.round(i * 32.4);
  const ticks = [0, 1, 2, 3, 4, 5, 6, 7, 8];

  return (
    <svg viewBox="0 0 582 399" className="block w-full border border-[#a9acae] bg-black text-[13px]" fill="#c4c4c4" role="img" aria-label="线性化应力">
      <text x="290" y="18" textAnchor="middle">线性化应力</text>
      <g stroke="#8c8c8c" strokeDasharray="1 3" shapeRendering="crispEdges">
        {ticks.slice(0, 7).map((i) => (
          <path key={i} d={`M92 ${y(i) + 0.5}H508`} />
        ))}
        {ticks.slice(1).map((i) => (
          <path key={i} d={`M${x(i) + 0.5} 47V290`} />
        ))}
      </g>
      <g stroke="#fff" shapeRendering="crispEdges">
        {ticks.slice(0, 8).map((i) => (
          <g key={i}>
            <path d={`M74 ${y(i)}H92`} strokeWidth="2" />
            {i < 7 && <path d={`M83 ${y(i) + 16.5}H92`} />}
          </g>
        ))}
        {ticks.map((i) => (
          <g key={i}>
            <path d={`M${x(i)} 274V291`} strokeWidth="2" />
            {i < 8 && <path d={`M${x(i) + 26.5} 274V282`} />}
          </g>
        ))}
        <path d="M92 46V276" strokeWidth="4" />
        <path d="M90 274H509" strokeWidth="4" />
      </g>
      {ticks.slice(0, 8).map((i) => (
        <text key={i} x="69" y={y(i)} textAnchor="end">{(i === 0 ? 0 : -2 * i).toFixed(2)}</text>
      ))}
      {ticks.map((i) => (
        <text key={i} x={x(i) - 2} y="309">{(i * 0.2).toFixed(2)}</text>
      ))}
      <text x="337" y="328" textAnchor="middle">厚度坐标系，从点 1 到点 2</text>
      <text transform="translate(23 161) rotate(-90)" textAnchor="middle">应力 - 局部 YY</text>
      <g fill="none">
        <path d="M92 153.500H491" stroke="#ff0000" />
        <path d="M92 249L491 58" stroke="#00ff00" />
        <path
          d="M92 233L111 231L125 223L143 220L163 215L177 210L196 200L226 185L246 182L264 179L285 170L311 154L331 140L370 121L379 111L388 109L404 100L423 81L432 78L467 61L491 52"
          stroke="#0000ff"
        />
        <path d="M15 345.500H162" stroke="#ff0000" />
        <path d="M15 363.500H162" stroke="#00ff00" />
        <path d="M15 381.500H162" stroke="#0000ff" />
      </g>
      <text x="192" y="346">膜应力</text>
      <text x="192" y="364">膜应力加上弯曲应力</text>
      <text x="192" y="382">总应力</text>
    </svg>
  );
};

const ResultTable = () => (
  <div className="mt-[13px] border border-[#cdd2d3] bg-white p-px">
    <table className="w-full table-fixed border-separate border-spacing-0 text-left text-[#a9a9a9]">
      <thead>
        <tr className="h-[23px] bg-[#fafafa]">
          <th className="w-14 border-r border-[#cdd2d3] bg-[#d8d8d8]" />
          {resultColumns.map((name) => (
            <th key={name} className="w-[110px] border-r border-b border-[#cdd2d3] pt-[2px] pl-[6px] font-normal leading-5">{name}</th>
          ))}
          <th className="border-r border-b border-[#cdd2d3]" />
        </tr>
      </thead>
      <tbody>
        {resultRows.map((row) => (
          <tr key={row} className="h-[26px]">
            <th className="border-t border-r border-t-[#e4e4e4] border-r-[#cdd2d3] bg-[#d8d8d8] pl-[5px] font-normal whitespace-nowrap">{row}</th>
            {resultColumns.map((name) => (
              <td key={name} className="border-r border-b border-[#e6e9eb] pl-[3px]">0</td>
            ))}
            <td />
          </tr>
        ))}
        <tr className="h-[15px]">
          <th className="border-t border-r border-t-[#e4e4e4] border-r-[#cdd2d3] bg-[#d8d8d8]" />
          <td colSpan={5} />
        </tr>
      </tbody>
    </table>
  </div>
);

const ReportDialog = () => (
  <div role="dialog" aria-label="线性化应力报告" className="absolute -top-px right-[221px] w-[611px] border border-[#949494] bg-[#eeeff1] text-[#333]">
    <div className="mx-px mt-px flex h-[31px] items-center bg-[#dadedf] text-[#222]">
      <h2 className="flex-1 pl-[19px] text-center">线性化应力报告</h2>
      <button type="button" className="mr-2" aria-label="关闭">
        <Icon size={12}><path d="M2.500 2L9 10M8.500 2L2 10" stroke="#6a6e72" strokeWidth="2.200" /></Icon>
      </button>
    </div>
    <form className="pt-5 pr-3 pl-[13px]">
      <div className="grid grid-cols-[89px_1fr] gap-y-[21px] pr-px">
        <label htmlFor="point1" className="mt-3 leading-[26px]">点 1:</label>
        <PointPicker id="point1" value="已定义" />

        <label htmlFor="point2-type" className="leading-[26px]">点 2:</label>
        <div className="flex flex-col gap-[7px]">
          <Select id="point2-type" value="基准点" />
          <PointPicker id="point2" value="选择点:" />
        </div>

        <label htmlFor="stress-component" className="leading-[26px]">分量:</label>
        <Select id="stress-component" value="局部 ZZ" />

        <label htmlFor="base-type" className="leading-[26px]">基点:</label>
        <div className="flex flex-col gap-[7px]">
          <Select id="base-type" value="按应力值定义" />
          <PointPicker id="base-point" value="选择点" disabled />
        </div>
      </div>
      <ResultTable />
      <div className="mt-[10px]">
        <StressChart />
      </div>
    </form>
    <footer className="mt-[10px] flex justify-between border-t border-[#c4c8ca] pt-2 pr-[13px] pb-[9px] pl-[13px]">
      <button type="button" className="h-[25px] border border-[#a9acae] bg-[#f7f7f7] p-[2px]">
        <span className="block border border-dotted border-black px-[6px] leading-[17px]">保存报告</span>
      </button>
      <button type="button" className="h-[25px] border border-[#a9acae] bg-[#f7f7f7] px-[9px]">完成</button>
    </footer>
  </div>
);

const App = () => {
  return (
    <div className="relative flex h-screen min-h-[998px] flex-col overflow-hidden border-t-4 border-l-4 border-[#a0a0a0] bg-[#b0b0b0] font-['Noto_Sans','Noto_Sans_CJK_SC',sans-serif] text-xs">
      <Defs />
      <TitleBar />
      <Ribbon />
      <div className="mb-[3px]">
        <QuickBar />
      </div>
      <Viewport />
      <ReportDialog />
    </div>
  );
};

export default App;
